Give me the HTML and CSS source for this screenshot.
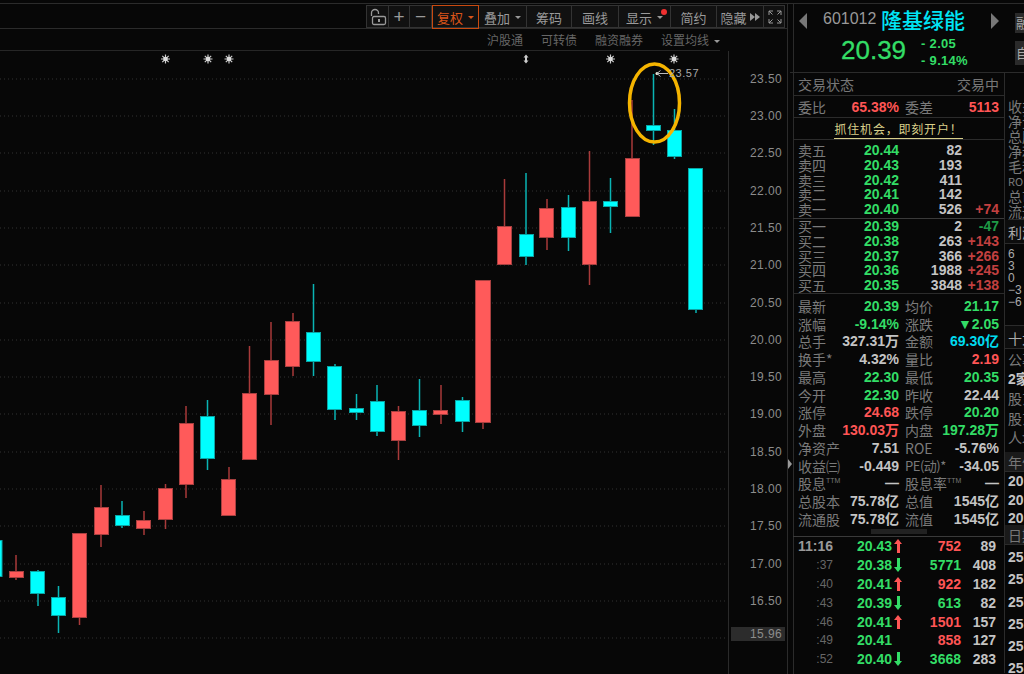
FILE: index.html
```html
<!DOCTYPE html>
<html lang="zh-CN">
  <head>
    <meta charset="UTF-8" />
    <title>隆基绿能 601012</title>
    <link rel="stylesheet" href="styles.css">
  </head>
  <body>
    <div class="app">
      <div class="chart-pane">
        <div class="toolbar">
          <div class="tool">
            <svg width="18" height="18" viewBox="0 0 18 18"><rect x="3.500" y="8.500" width="13" height="8" rx="1.500" fill="none" stroke="#999" stroke-width="1.300"/><path d="M2.500 8V5a3.500 3.500 0 0 1 7 0v1" fill="none" stroke="#999" stroke-width="1.300"/><rect x="9" y="11" width="2" height="3" fill="#999"/></svg>
          </div>
          <div class="tool plain">+</div>
          <div class="tool plain">−</div>
          <div class="tool active">复权<span class="caret"></span></div>
          <div class="tool">叠加<span class="caret"></span></div>
          <div class="tool">筹码</div>
          <div class="tool">画线</div>
          <div class="tool">显示<span class="caret"></span><span class="red-dot"></span></div>
          <div class="tool">简约</div>
          <div class="tool">隐藏<span class="more"><i></i><i></i></span></div>
          <div class="tool">
            <svg width="14" height="14" viewBox="0 0 14 14" fill="none" stroke="#999"><path d="M1 5V1h4M1 1l3.500 3.500M13 5V1H9M13 1L9.500 4.500M1 9v4h4M1 13l3.500-3.500M13 9v4H9M13 13L9.500 9.500"/></svg>
          </div>
        </div>
        <div class="sub-bar">
          <div class="sub-links">
            <span>沪股通</span>
            <span>可转债</span>
            <span>融资融券</span>
            <span>设置均线<i class="caret small"></i></span>
          </div>
        </div>
        <svg class="kline" width="787" height="623" viewBox="0 51 787 623">
          <defs>
            <g id="star">
              <path d="M-4.500 0H4.500M0-4.500V4.500M-3.200-3.200L3.200 3.200M-3.200 3.200L3.200-3.200" stroke="#ccc" stroke-width="1.200"/>
              <circle r="2.300" fill="#ddd"/>
            </g>
          </defs>

          <g class="grid">
            <line x1="0" x2="728" y1="79" y2="79"/>
            <line x1="0" x2="728" y1="116" y2="116"/>
            <line x1="0" x2="728" y1="153" y2="153"/>
            <line x1="0" x2="728" y1="191" y2="191"/>
            <line x1="0" x2="728" y1="228" y2="228"/>
            <line x1="0" x2="728" y1="265" y2="265"/>
            <line x1="0" x2="728" y1="303" y2="303"/>
            <line x1="0" x2="728" y1="340" y2="340"/>
            <line x1="0" x2="728" y1="377" y2="377"/>
            <line x1="0" x2="728" y1="414" y2="414"/>
            <line x1="0" x2="728" y1="452" y2="452"/>
            <line x1="0" x2="728" y1="489" y2="489"/>
            <line x1="0" x2="728" y1="526" y2="526"/>
            <line x1="0" x2="728" y1="564" y2="564"/>
            <line x1="0" x2="728" y1="601" y2="601"/>
            <line x1="0" x2="728" y1="638" y2="638"/>
          </g>

          <line class="axis-line" x1="728.500" x2="728.500" y1="51" y2="674"/>

          <g class="axis-labels">
            <text x="750" y="83">23.50</text>
            <text x="750" y="120">23.00</text>
            <text x="750" y="157">22.50</text>
            <text x="750" y="195">22.00</text>
            <text x="750" y="232">21.50</text>
            <text x="750" y="269">21.00</text>
            <text x="750" y="307">20.50</text>
            <text x="750" y="344">20.00</text>
            <text x="750" y="381">19.50</text>
            <text x="750" y="418">19.00</text>
            <text x="750" y="456">18.50</text>
            <text x="750" y="493">18.00</text>
            <text x="750" y="530">17.50</text>
            <text x="750" y="568">17.00</text>
            <text x="750" y="605">16.50</text>
          </g>
          <rect class="last-box" x="731" y="627" width="54" height="14"/>
          <text class="last-label" x="750" y="638">15.96</text>

          <use href="#star" x="165.500" y="59"/>
          <use href="#star" x="208" y="59"/>
          <use href="#star" x="229" y="59"/>
          <path class="split-mark" d="M526 54.500l2.500 3h-1.500v3h1.500l-2.500 3-2.500-3h1.500v-3h-1.500z"/>
          <use href="#star" x="610.500" y="59"/>
          <use href="#star" x="674" y="59"/>

          <g class="down">
            <line x1="0.500" x2="0.500" y1="540" y2="577"/><rect x="-4" y="540.500" width="6" height="36"/>
            <line x1="38" x2="38" y1="570" y2="606"/><rect x="30.500" y="571.500" width="14" height="22"/>
            <line x1="58.500" x2="58.500" y1="586" y2="633"/><rect x="51.500" y="597.500" width="14" height="18"/>
            <line x1="122" x2="122" y1="501" y2="528"/><rect x="115.500" y="515.500" width="14" height="10"/>
            <line x1="207.500" x2="207.500" y1="400" y2="470"/><rect x="200.500" y="416.500" width="14" height="42"/>
            <line x1="313.500" x2="313.500" y1="284" y2="376"/><rect x="306.500" y="332.500" width="14" height="29"/>
            <line x1="335" x2="335" y1="364" y2="420"/><rect x="327.500" y="366.500" width="14" height="43"/>
            <line x1="356.500" x2="356.500" y1="394" y2="420"/><rect x="349.500" y="408.500" width="14" height="4"/>
            <line x1="377" x2="377" y1="385" y2="436"/><rect x="370.500" y="401.500" width="14" height="30"/>
            <line x1="419.500" x2="419.500" y1="379" y2="437"/><rect x="412.500" y="410.500" width="14" height="15"/>
            <line x1="462.500" x2="462.500" y1="397" y2="432"/><rect x="455.500" y="400.500" width="14" height="21"/>
            <line x1="526" x2="526" y1="173" y2="265"/><rect x="519.500" y="234.500" width="14" height="22"/>
            <line x1="568.500" x2="568.500" y1="195" y2="251"/><rect x="561.500" y="207.500" width="14" height="30"/>
            <line x1="610.500" x2="610.500" y1="178" y2="233"/><rect x="603.500" y="201.500" width="14" height="5"/>
            <line x1="653.500" x2="653.500" y1="74" y2="145"/><rect x="646.500" y="125.500" width="14" height="5"/>
            <line x1="674.500" x2="674.500" y1="109" y2="159"/><rect x="667.500" y="130.500" width="14" height="26"/>
            <line x1="696" x2="696" y1="168" y2="313"/><rect x="688.500" y="168.500" width="14" height="141"/>
          </g>

          <g class="up">
            <line x1="16" x2="16" y1="555" y2="580"/><rect x="9.500" y="571.500" width="14" height="6"/>
            <line x1="79.500" x2="79.500" y1="533" y2="625"/><rect x="72.500" y="533.500" width="14" height="84"/>
            <line x1="101" x2="101" y1="485" y2="547"/><rect x="94.500" y="507.500" width="14" height="27"/>
            <line x1="144" x2="144" y1="511" y2="535"/><rect x="136.500" y="520.500" width="14" height="8"/>
            <line x1="165.500" x2="165.500" y1="484" y2="529"/><rect x="158.500" y="488.500" width="14" height="31"/>
            <line x1="186" x2="186" y1="406" y2="498"/><rect x="179.500" y="423.500" width="14" height="61"/>
            <line x1="229" x2="229" y1="467" y2="516"/><rect x="221.500" y="479.500" width="14" height="36"/>
            <line x1="249.500" x2="249.500" y1="346" y2="460"/><rect x="242.500" y="393.500" width="14" height="66"/>
            <line x1="271" x2="271" y1="322" y2="425"/><rect x="264.500" y="360.500" width="14" height="34"/>
            <line x1="293" x2="293" y1="313" y2="376"/><rect x="285.500" y="321.500" width="14" height="45"/>
            <line x1="398.500" x2="398.500" y1="406" y2="460"/><rect x="391.500" y="411.500" width="14" height="29"/>
            <line x1="441" x2="441" y1="385" y2="424"/><rect x="433.500" y="410.500" width="14" height="4"/>
            <line x1="483" x2="483" y1="280" y2="429"/><rect x="475.500" y="280.500" width="15" height="142"/>
            <line x1="504.500" x2="504.500" y1="179" y2="265"/><rect x="497.500" y="226.500" width="14" height="38"/>
            <line x1="547" x2="547" y1="199" y2="250"/><rect x="539.500" y="208.500" width="14" height="29"/>
            <line x1="589.500" x2="589.500" y1="151" y2="285"/><rect x="582.500" y="201.500" width="14" height="63"/>
            <line x1="632" x2="632" y1="100" y2="217"/><rect x="625.500" y="158.500" width="14" height="58"/>
          </g>

          <ellipse class="callout" cx="654.500" cy="103" rx="25" ry="39"/>

          <circle cx="657" cy="73.500" r="1.500" fill="#eed"/>
          <path class="high-arrow" d="M668 73.500H657M660.500 70.500l-3.500 3 3.500 3"/>
          <text class="high-label" x="669" y="77">23.57</text>
        </svg>
      </div>

      <div class="splitter"><span class="grip"></span></div>

      <div class="side">
        <div class="header">
          <span class="arrow-left"></span>
          <span class="code">601012</span>
          <span class="name">隆基绿能</span>
          <span class="arrow-right"></span>
          <div class="mini-btns"><span>融</span><span>自</span></div>
          <div class="price-line">
            <span class="big-price">20.39</span>
            <div class="delta">
              <span>- 2.05</span>
              <span>- 9.14%</span>
            </div>
          </div>
        </div>

        <div class="columns">
          <div class="main-col">
            <div class="status-row">
              <span>交易状态</span><span>交易中</span>
            </div>
            <div class="bid-row">
              <span class="lbl">委比</span><b class="red">65.38%</b>
              <span class="lbl">委差</span><b class="red">5113</b>
            </div>
            <div class="promo"><span>抓住机会，即刻开户！</span></div>

            <div class="book sell">
              <span class="lbl">卖五</span><b class="green">20.44</b><b class="white">82</b><b></b>
              <span class="lbl">卖四</span><b class="green">20.43</b><b class="white">193</b><b></b>
              <span class="lbl">卖三</span><b class="green">20.42</b><b class="white">411</b><b></b>
              <span class="lbl">卖二</span><b class="green">20.41</b><b class="white">142</b><b></b>
              <span class="lbl">卖一</span><b class="green">20.40</b><b class="white">526</b><b class="dim-red">+74</b>
            </div>
            <div class="book buy">
              <span class="lbl">买一</span><b class="green">20.39</b><b class="white">2</b><b class="dim-green">-47</b>
              <span class="lbl">买二</span><b class="green">20.38</b><b class="white">263</b><b class="dim-red">+143</b>
              <span class="lbl">买三</span><b class="green">20.37</b><b class="white">366</b><b class="dim-red">+266</b>
              <span class="lbl">买四</span><b class="green">20.36</b><b class="white">1988</b><b class="dim-red">+245</b>
              <span class="lbl">买五</span><b class="green">20.35</b><b class="white">3848</b><b class="dim-red">+138</b>
            </div>

            <div class="stats">
              <span class="lbl">最新</span><b class="green">20.39</b><span class="lbl">均价</span><b class="green">21.17</b>
              <span class="lbl">涨幅</span><b class="green">-9.14%</b><span class="lbl">涨跌</span><b class="green">▼2.05</b>
              <span class="lbl">总手</span><b class="white">327.31万</b><span class="lbl">金额</span><b class="cyan">69.30亿</b>
              <span class="lbl">换手*</span><b class="white">4.32%</b><span class="lbl">量比</span><b class="red">2.19</b>
              <span class="lbl">最高</span><b class="green">22.30</b><span class="lbl">最低</span><b class="green">20.35</b>
              <span class="lbl">今开</span><b class="green">22.30</b><span class="lbl">昨收</span><b class="white">22.44</b>
              <span class="lbl">涨停</span><b class="red">24.68</b><span class="lbl">跌停</span><b class="green">20.20</b>
              <span class="lbl">外盘</span><b class="red">130.03万</b><span class="lbl">内盘</span><b class="green">197.28万</b>
              <span class="lbl">净资产</span><b class="white">7.51</b><span class="lbl">ROE</span><b class="white">-5.76%</b>
              <span class="lbl">收益㈢</span><b class="white">-0.449</b><span class="lbl narrow">PE(动)*</span><b class="white">-34.05</b>
              <span class="lbl">股息<sup>TTM</sup></span><b class="white">—</b><span class="lbl">股息率<sup>TTM</sup></span><b class="white">—</b>
              <span class="lbl">总股本</span><b class="white">75.78亿</b><span class="lbl">总值</span><b class="white">1545亿</b>
              <span class="lbl">流通股</span><b class="white">75.78亿</b><span class="lbl">流值</span><b class="white">1545亿</b>
            </div>
            <div class="collapse-bar"><span class="handle"></span></div>

            <div class="ticks">
              <b class="time first">11:16</b><b class="green">20.43</b><i class="tick-up"></i><b class="red">752</b><b class="white">89</b>
              <b class="time">:37</b><b class="green">20.38</b><i class="tick-down"></i><b class="green">5771</b><b class="white">408</b>
              <b class="time">:40</b><b class="green">20.41</b><i class="tick-up"></i><b class="red">922</b><b class="white">182</b>
              <b class="time">:43</b><b class="green">20.39</b><i class="tick-down"></i><b class="green">613</b><b class="white">82</b>
              <b class="time">:46</b><b class="green">20.41</b><i class="tick-up"></i><b class="red">1501</b><b class="white">157</b>
              <b class="time">:49</b><b class="green">20.41</b><i></i><b class="red">858</b><b class="white">127</b>
              <b class="time">:52</b><b class="green">20.40</b><i class="tick-down"></i><b class="green">3668</b><b class="white">283</b>
            </div>
          </div>

          <div class="clip-col">
            <div class="clip-empty"></div>
            <div class="clip-list finance">
              <span>收益</span><span>净资</span><span>总股</span><span>净利</span><span>毛利</span><span class="latin">ROE</span><span>总市</span><span>流通</span>
            </div>
            <div class="clip-tab">利润</div>
            <div class="clip-scale">
              <span>6</span><span>3</span><span>0</span><span>−3</span><span>−6</span>
            </div>
            <div class="clip-tab top10">十大</div>
            <div class="clip-list holders">
              <span>公募</span><b>2家</b><span>股东</span><span>股东</span><span>人均</span>
            </div>
            <div class="clip-tab soft">年份</div>
            <div class="clip-list years"><b>20</b><b>20</b><b>20</b></div>
            <div class="clip-tab soft">日期</div>
            <div class="clip-list days"><b>25</b><b>25</b><b>25</b><b>25</b><b>25</b><b>25</b></div>
          </div>
        </div>
      </div>
    </div>
  </body>
</html>
```

FILE: styles.css
```css
* {
  box-sizing: border-box;
}
html,
body {
  margin: 0;
  height: 100%;
  overflow: hidden;
  background: #070707;
}
body {
  font-family: "Noto Sans CJK SC", "Liberation Sans", sans-serif;
  color: #8a8a8a;
}
b,
i {
  font-style: normal;
}
.app {
  display: flex;
  width: 1024px;
  height: 674px;
  padding-top: 3px;
  overflow: hidden;
  position: relative;
}
.app::before {
  content: "";
  position: absolute;
  left: 0;
  right: 0;
  top: 3px;
  height: 1px;
  background: #2b2b2b;
}

/* left chart */
.chart-pane {
  width: 787px;
  flex: none;
}
.toolbar {
  display: grid;
  grid-template-columns: 22px 21px 22px 47px 48px 45px 47px 52px 46px 47px 22px;
  height: 23px;
  margin: 2px 2px 0 366px;
  border: 1px solid #333;
  background: #111;
}
.tool {
  position: relative;
  display: flex;
  align-items: center;
  justify-content: center;
  border-right: 1px solid #333;
  font-size: 13px;
  color: #9a9a9a;
  white-space: nowrap;
}
.tool:last-child {
  border-right: 0;
}
.tool.plain {
  font-family: "Liberation Sans", sans-serif;
  font-size: 19px;
  font-weight: 300;
}
.tool.active {
  border: 1px solid #c94a10;
  color: #d9541a;
  margin: -1px 0;
}
.caret {
  display: inline-block;
  margin-left: 5px;
  border-left: 3px solid transparent;
  border-right: 3px solid transparent;
  border-top: 3px solid #999;
}
.tool.active .caret {
  border-top-color: #d9541a;
}
.caret.small {
  margin-left: 5px;
  vertical-align: middle;
}
.red-dot {
  position: absolute;
  top: 3px;
  right: 3px;
  width: 6px;
  height: 6px;
  border-radius: 50%;
  background: #f03030;
}
.more {
  display: flex;
  margin-left: 3px;
}
.more i {
  border-left: 5px solid #999;
  border-top: 4px solid transparent;
  border-bottom: 4px solid transparent;
}
.sub-bar {
  height: 23px;
  border-top: 1px solid #2b2b2b;
  padding-right: 67px;
}
.sub-links {
  display: flex;
  justify-content: flex-end;
  gap: 18px;
  height: 22px;
  align-items: center;
  font-size: 12px;
  color: #666;
  border-bottom: 1px solid #262626;
}
.kline {
  display: block;
}
.grid line {
  stroke: #333;
  stroke-width: 1;
  stroke-dasharray: 1 3;
}
.axis-line {
  stroke: #2a2a2a;
}
.axis-labels text,
.last-label {
  font-family: "Liberation Sans", sans-serif;
  font-size: 12px;
  fill: #8c8c8c;
  letter-spacing: 0.4px;
}
.last-box {
  fill: #2c2c2c;
}
.split-mark {
  fill: #ccc;
}
.down line {
  stroke: #0ab4b4;
  stroke-width: 1.500;
}
.down rect {
  fill: #00ffff;
  stroke: #0aa5a5;
}
.up line {
  stroke: #a83a3a;
  stroke-width: 1.500;
}
.up rect {
  fill: #ff5a5a;
  stroke: #a84040;
}
.callout {
  fill: none;
  stroke: #f5b400;
  stroke-width: 3.500;
}
.high-arrow {
  fill: none;
  stroke: #bbb;
}
.high-label {
  font-family: "Liberation Sans", sans-serif;
  font-size: 11px;
  fill: #aaa;
  letter-spacing: 0.5px;
}

/* splitter */
.splitter {
  width: 3px;
  flex: none;
  border-left: 1px solid #2b2b2b;
  position: relative;
}
.grip {
  position: absolute;
  left: 0;
  top: 456px;
  border-left: 4px solid #999;
  border-top: 5px solid transparent;
  border-bottom: 5px solid transparent;
}

/* right panel */
.side {
  width: 234px;
  flex: none;
  font-size: 14px;
  overflow: hidden;
  background: linear-gradient(#2b2b2b, #2b2b2b) 3px 0 / 1px 100% no-repeat;
}
.header {
  position: relative;
  height: 70px;
  border-bottom: 1px solid #2b2b2b;
  white-space: nowrap;
}
.arrow-left,
.arrow-right {
  position: absolute;
  top: 10px;
  border-top: 8px solid transparent;
  border-bottom: 8px solid transparent;
}
.arrow-left {
  left: 9px;
  border-right: 8px solid #777;
}
.arrow-right {
  left: 201px;
  border-left: 8px solid #777;
}
.code {
  position: absolute;
  left: 33px;
  top: 7px;
  font-family: "Liberation Sans", sans-serif;
  font-size: 16px;
  color: #999;
}
.name {
  position: absolute;
  left: 91px;
  top: 1px;
  font-size: 21px;
  line-height: 30px;
  font-weight: 500;
  color: #00e5f5;
}
.mini-btns {
  position: absolute;
  left: 225px;
  top: 10px;
  display: flex;
  flex-direction: column;
  gap: 8px;
  font-size: 13px;
}
.mini-btns span {
  display: block;
  width: 20px;
  height: 20px;
  line-height: 20px;
  padding-left: 1px;
  background: #2a2a2a;
  color: #aaa;
}
.mini-btns span + span {
  height: 24px;
  line-height: 24px;
}
.price-line {
  position: absolute;
  left: 51px;
  top: 32px;
  display: flex;
  gap: 15px;
  font-family: "Liberation Sans", sans-serif;
  color: #33dd66;
}
.big-price {
  font-size: 26px;
  line-height: 30px;
  -webkit-text-stroke: 0.3px #33dd66;
}
.delta {
  display: flex;
  flex-direction: column;
  font-size: 13px;
  line-height: 17px;
  font-weight: 700;
  letter-spacing: 0.3px;
}
.columns {
  display: flex;
  height: 600px;
  padding-left: 3px;
}
.main-col {
  width: 212px;
  flex: none;
  border-right: 1px solid #2b2b2b;
}
.lbl {
  color: #7a7a7a;
  font-size: 14px;
  line-height: 14px;
  white-space: nowrap;
}
.lbl.narrow {
  font-size: 13px;
  letter-spacing: -0.5px;
}
.lbl sup {
  font-family: "Liberation Sans", sans-serif;
  font-size: 7px;
  vertical-align: 6px;
  line-height: 0;
  color: #777;
}
.main-col b {
  font-family: "Liberation Sans", "Noto Sans CJK SC", sans-serif;
  font-size: 14px;
  line-height: 14px;
  font-weight: 700;
  text-align: right;
  white-space: nowrap;
}
.green { color: #33dd66; }
.red { color: #ff5555; }
.white { color: #c4c4c4; }
.cyan { color: #00dcf0; }
.dim-red { color: #c24040; }
.dim-green { color: #1f9a46; }

.status-row {
  display: flex;
  justify-content: space-between;
  align-items: center;
  height: 23px;
  padding: 0 5px;
  font-size: 14px;
  color: #777;
  border-bottom: 1px solid #2b2b2b;
}
.bid-row {
  display: grid;
  grid-template-columns: 28px 73px 42px minmax(0, 1fr);
  align-items: center;
  height: 22px;
  padding: 0 5px;
  border-bottom: 1px solid #2b2b2b;
}
.bid-row .lbl:nth-of-type(2) {
  padding-left: 6px;
}
.promo {
  height: 22px;
  line-height: 21px;
  text-align: center;
  font-size: 12px;
  letter-spacing: 0.8px;
  color: #d8cf8a;
  border-bottom: 1px solid #2b2b2b;
}
.promo span {
  border-bottom: 1px solid #d8cf8a;
  padding-bottom: 1px;
}
.book {
  display: grid;
  grid-template-columns: 60px 41px 63px minmax(0, 1fr);
  grid-auto-rows: 14.700px;
  align-items: center;
  padding: 3px 5px 0;
  height: 79px;
  border-bottom: 1px solid #3a3a3a;
}
.book.buy {
  height: 75px;
  padding-top: 0;
  border-bottom-color: #2b2b2b;
}
.stats {
  display: grid;
  grid-template-columns: 42px 59px 42px minmax(0, 1fr);
  grid-auto-rows: 17.750px;
  align-items: center;
  padding: 3px 5px 0;
  height: 235px;
}
.stats .lbl:nth-child(4n+3) {
  padding-left: 6px;
}
.collapse-bar {
  height: 8px;
  border-bottom: 1px solid #3a3a3a;
}
.handle {
  display: block;
  width: 56px;
  height: 5px;
  margin-left: 78px;
  background: #222;
}
.ticks {
  display: grid;
  grid-template-columns: 46px 48px 14px 55px minmax(0, 1fr);
  grid-auto-rows: 18.800px;
  align-items: center;
  padding: 0 8px 0 5px;
}
.main-col .time {
  color: #666;
  font-size: 12px;
  font-weight: 400;
  padding-right: 11px;
}
.main-col .time.first {
  color: #999;
  font-size: 14px;
  font-weight: 700;
  text-align: left;
  padding-right: 0;
}
.tick-up,
.tick-down {
  position: relative;
  display: block;
  height: 14px;
  width: 7px;
  margin-left: 3px;
}
.tick-up::before,
.tick-down::before {
  content: "";
  position: absolute;
  left: 2px;
  width: 3px;
  height: 10px;
}
.tick-up::after,
.tick-down::after {
  content: "";
  position: absolute;
  left: -1px;
  border-left: 4.500px solid transparent;
  border-right: 4.500px solid transparent;
}
.tick-up::before { top: 4px; background: #ff5555; }
.tick-up::after { top: 0; border-bottom: 5px solid #ff5555; }
.tick-down::before { top: 0; background: #33dd66; }
.tick-down::after { bottom: 0; border-top: 5px solid #33dd66; }

/* the column that runs off the right edge */
.clip-col {
  flex: 1;
  min-width: 0;
  overflow: hidden;
  white-space: nowrap;
  padding-left: 3px;
  font-size: 14px;
  color: #7a7a7a;
}
.clip-empty {
  height: 23px;
}
.clip-list {
  display: flex;
  flex-direction: column;
}
.clip-list b {
  font-family: "Liberation Sans", "Noto Sans CJK SC", sans-serif;
  color: #c4c4c4;
}
.finance {
  height: 124px;
  padding-top: 3px;
  line-height: 15px;
  border-bottom: 1px solid #2b2b2b;
}
.latin {
  font-size: 11px;
}
.clip-tab {
  height: 24px;
  line-height: 24px;
  margin-left: -3px;
  padding-left: 3px;
  color: #aaa;
  background: #0d0d0d;
  border-bottom: 1px solid #2b2b2b;
}
.clip-tab.top10 {
  border-top: 1px solid #2b2b2b;
  color: #aaa;
}
.clip-tab.soft {
  height: 20px;
  line-height: 20px;
  background: #1a1a1a;
  color: #777;
}
.clip-scale {
  display: flex;
  flex-direction: column;
  height: 81px;
  padding-top: 4px;
  font-family: "Liberation Sans", sans-serif;
  font-size: 12px;
  line-height: 12px;
  color: #aaa;
}
.holders {
  line-height: 19.500px;
  height: 103px;
  padding-top: 1px;
}
.years {
  line-height: 18.500px;
  height: 53px;
}
.days {
  line-height: 22.300px;
  padding-top: 1px;
}
```
